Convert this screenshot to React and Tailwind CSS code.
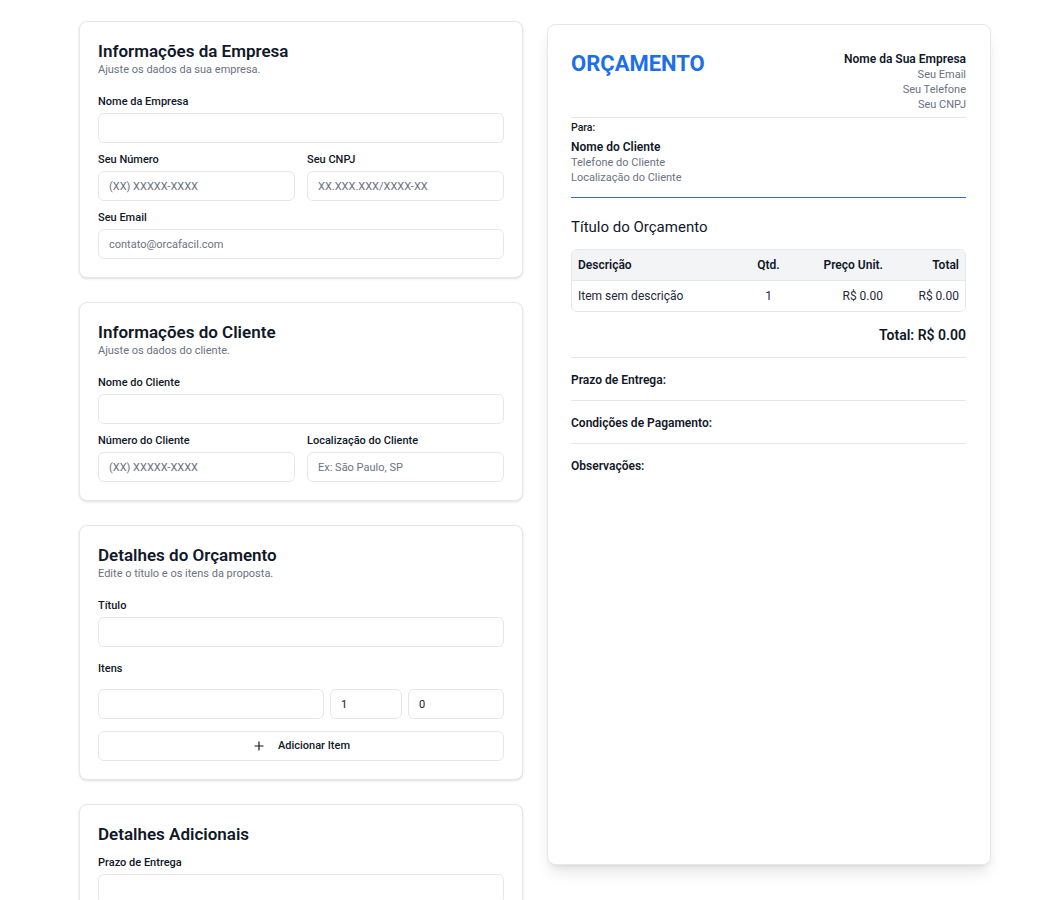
import { Plus } from 'lucide-react'

const font = { fontFamily: 'Roboto, "Noto Sans", sans-serif' }

function Field({ label, placeholder, defaultValue }) {
  return (
    <div>
      <label className="block text-[11px] leading-4 font-medium text-gray-900 mb-[3px]">{label}</label>
      <input
        type="text"
        placeholder={placeholder}
        defaultValue={defaultValue}
        className="w-full h-[30px] rounded-md border border-gray-200 bg-white px-[10px] text-[11px] text-gray-900 placeholder:text-gray-500 outline-none"
      />
    </div>
  )
}

function Card({ title, description, children }) {
  return (
    <div className="rounded-lg border border-gray-200 bg-white shadow-sm p-[18px]">
      <h2 className="text-[17px] leading-[22px] font-semibold text-gray-900">{title}</h2>
      {description ? (
        <p className="text-[11px] leading-4 text-gray-500 mb-[16px]">{description}</p>
      ) : (
        <div className="h-[10px]" />
      )}
      {children}
    </div>
  )
}

function QuoteForm() {
  return (
    <div className="flex flex-col gap-6">
      <Card title="Informações da Empresa" description="Ajuste os dados da sua empresa.">
        <div className="flex flex-col gap-[9px]">
          <Field label="Nome da Empresa" />
          <div className="grid grid-cols-2 gap-3">
            <Field label="Seu Número" placeholder="(XX) XXXXX-XXXX" />
            <Field label="Seu CNPJ" placeholder="XX.XXX.XXX/XXXX-XX" />
          </div>
          <Field label="Seu Email" placeholder="contato@orcafacil.com" />
        </div>
      </Card>

      <Card title="Informações do Cliente" description="Ajuste os dados do cliente.">
        <div className="flex flex-col gap-[9px]">
          <Field label="Nome do Cliente" />
          <div className="grid grid-cols-2 gap-3">
            <Field label="Número do Cliente" placeholder="(XX) XXXXX-XXXX" />
            <Field label="Localização do Cliente" placeholder="Ex: São Paulo, SP" />
          </div>
        </div>
      </Card>

      <Card title="Detalhes do Orçamento" description="Edite o título e os itens da proposta.">
        <Field label="Título" />
        <div className="mt-[14px]">
          <p className="text-[11px] leading-4 font-medium text-gray-900 mb-3">Itens</p>
          <div className="flex gap-[6px]">
            <input className="flex-1 min-w-0 h-[30px] rounded-md border border-gray-200 px-[10px] text-[11px] outline-none" />
            <input defaultValue="1" className="w-[72px] h-[30px] rounded-md border border-gray-200 px-[10px] text-[11px] text-gray-900 outline-none" />
            <input defaultValue="0" className="w-[96px] h-[30px] rounded-md border border-gray-200 px-[10px] text-[11px] text-gray-900 outline-none" />
          </div>
          <button className="mt-3 w-full h-[30px] rounded-md border border-gray-200 bg-white flex items-center justify-center text-[11px] font-medium text-gray-900">
            <Plus size={14} strokeWidth={2} className="mr-3" />
            Adicionar Item
          </button>
        </div>
      </Card>

      <Card title="Detalhes Adicionais">
        <div className="flex flex-col gap-[9px]">
          <Field label="Prazo de Entrega" />
          <Field label="Condições de Pagamento" />
          <div>
            <label className="block text-[11px] leading-4 font-medium text-gray-900 mb-[3px]">Observações</label>
            <textarea className="w-full h-20 rounded-md border border-gray-200 px-[10px] py-2 text-[11px] outline-none resize-none" />
          </div>
        </div>
      </Card>
    </div>
  )
}

function Preview() {
  return (
    <div className="mt-[3px] h-[841px] rounded-lg border border-gray-200 bg-white shadow-lg pt-[23px] pb-6 pl-[23px] pr-6">
      {/* Header */}
      <div className="flex justify-between items-start mb-[5px]">
        <h1 className="text-[22px] leading-8 font-bold text-[#1c6fe8]">ORÇAMENTO</h1>
        <div className="text-right mt-[3px]">
          <p className="text-xs leading-4 font-semibold text-gray-900">Nome da Sua Empresa</p>
          <p className="text-[11px] leading-[15px] text-gray-500">Seu Email</p>
          <p className="text-[11px] leading-[15px] text-gray-500">Seu Telefone</p>
          <p className="text-[11px] leading-[15px] text-gray-500">Seu CNPJ</p>
        </div>
      </div>
      <div className="border-t border-gray-200 pt-[3px] pb-3 border-b border-b-[#2f6fd4]">
        <p className="text-[10.5px] leading-[14px] font-medium text-gray-900">Para:</p>
        <p className="mt-1 text-xs leading-4 font-semibold text-gray-900">Nome do Cliente</p>
        <p className="text-[11px] leading-[15px] text-gray-500">Telefone do Cliente</p>
        <p className="text-[11px] leading-[15px] text-gray-500">Localização do Cliente</p>
      </div>

      <h3 className="mt-[17px] text-[15px] leading-6 font-normal text-gray-900">Título do Orçamento</h3>

      {/* Items table */}
      <div className="mt-[10px] rounded-md border border-gray-200 overflow-hidden text-xs text-gray-900">
        <div className="grid grid-cols-[1fr_79px_81px_76px] h-[31px] items-center bg-gray-100 border-b border-gray-200 font-semibold">
          <div className="px-[6px]">Descrição</div>
          <div className="px-[6px] text-center">Qtd.</div>
          <div className="px-[6px] text-right">Preço Unit.</div>
          <div className="px-[6px] text-right">Total</div>
        </div>
        <div className="grid grid-cols-[1fr_79px_81px_76px] h-[30px] items-center text-gray-800">
          <div className="px-[6px]">Item sem descrição</div>
          <div className="px-[6px] text-center">1</div>
          <div className="px-[6px] text-right">R$ 0.00</div>
          <div className="px-[6px] text-right">R$ 0.00</div>
        </div>
      </div>

      <p className="mt-[13px] pb-3 text-right text-sm leading-5 font-semibold text-gray-900">Total: R$ 0.00</p>

      {['Prazo de Entrega:', 'Condições de Pagamento:', 'Observações:'].map((t) => (
        <div key={t} className="border-t border-gray-200 pt-[14px] pb-3">
          <p className="text-xs leading-4 font-semibold text-gray-900">{t}</p>
        </div>
      ))}
    </div>
  )
}

export default function App() {
  return (
    <div className="min-h-screen bg-white pt-[21px] pb-10 pl-[79px] pr-[63px]" style={font}>
      <div className="grid grid-cols-2 gap-6 items-start">
        <QuoteForm />
        <Preview />
      </div>
    </div>
  )
}
